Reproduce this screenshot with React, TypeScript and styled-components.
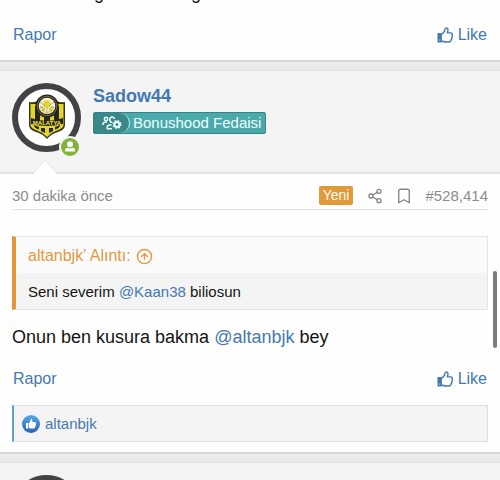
import React from "react";
import styled, { createGlobalStyle } from "styled-components";
import { Bookmark, CircleArrowUp, Share2 } from "lucide-react";

const GlobalStyle = createGlobalStyle`
  * { box-sizing: border-box; }
  html { overflow: hidden; }
  body {
    margin: 0;
    background: #ebebeb;
    color: #141414;
    font-family: "Liberation Sans", Arial, sans-serif;
    font-size: 16px;
    line-height: 20px;
  }
  a { color: #4479b0; text-decoration: none; }
  p { margin: 0; }
`;

const Feed = styled.main`
  display: flex;
  flex-direction: column;
  gap: 8px;
  height: 100vh;
  overflow: hidden;
`;

const Post = styled.article`
  flex: none;
  background: #fefefe;
  border-top: 1px solid #dedede;
  border-bottom: 2px solid #d8d8d8;
`;

const PreviousPost = styled(Post)`
  margin-top: -18px;
  border-top: 0;
`;

const PreviousBody = styled.div`
  padding: 0 12px 15px;
`;

const UserBar = styled.header`
  position: relative;
  display: flex;
  gap: 12px;
  height: 103px;
  padding: 12px;
  background: #f4f4f4;
  border-bottom: 2px solid #e2e2e2;
`;

const Notch = styled.svg`
  position: absolute;
  left: 34px;
  bottom: -2px;
  width: 22px;
  height: 15px;
`;

const Avatar = styled.a`
  position: relative;
  flex: none;
  display: block;
  width: 69px;
  height: 69px;
  border: 6px solid #434345;
  border-radius: 50%;
  background: #fff;
`;

const Crest = styled.svg`
  display: block;
  width: 36px;
  height: 46px;
  margin: 5px auto;
`;

const Online = styled.svg`
  position: absolute;
  right: -6px;
  bottom: -12px;
  width: 22px;
  height: 22px;
`;

const Identity = styled.div`
  display: flex;
  flex-direction: column;
  align-items: flex-start;
  padding-top: 3px;
  gap: 5px;
`;

const UserName = styled.a`
  font-size: 18px;
  font-weight: bold;
  line-height: 21px;
`;

const Rank = styled.div`
  display: flex;
  align-items: center;
  gap: 3px;
  height: 22px;
  padding-right: 4px;
  border: 1px solid #388385;
  border-radius: 2px;
  background: #4aa9ab;
  color: #edffff;
  font-size: 15px;
`;

const RankIcon = styled.span`
  display: flex;
  align-items: center;
  justify-content: center;
  width: 36px;
  height: 20px;
  border-right: 1px solid #c8ebeb;
  border-radius: 0 12px 12px 0;
  background: #39898b;
`;

const Content = styled.div`
  padding: 0 12px 10px;
`;

const Meta = styled.div`
  display: flex;
  align-items: center;
  justify-content: space-between;
  height: 36px;
  padding-top: 8px;
  border-bottom: 1px solid #e3e3e3;
  color: #8c8c8c;
  font-size: 15px;
`;

const MetaTools = styled.div`
  display: flex;
  align-items: center;
  gap: 12px;
`;

const NewTag = styled.span`
  padding: 0 4px;
  margin-right: 2px;
  border-radius: 2px;
  background: #e09a3a;
  color: #fffaf0;
  font-size: 14px;
  line-height: 19px;
`;

const IconButton = styled.button`
  display: flex;
  padding: 0;
  border: 0;
  background: none;
  color: #858585;
`;

const PostNumber = styled.a`
  color: #8c8c8c;
`;

const Quote = styled.blockquote`
  margin: 26px 0 0;
  border: 1px solid #e6e6e6;
  border-left: 4px solid #e1973a;
  background: #f4f4f4;
`;

const QuoteTitle = styled.a`
  display: flex;
  align-items: center;
  gap: 5px;
  height: 36px;
  padding: 2px 12px 0;
  background: #fafafa;
  color: #e19a43;
`;

const QuoteText = styled.p`
  height: 36px;
  padding: 9px 12px 0;
  font-size: 15px;
`;

const BodyText = styled.p`
  font-size: 18px;
  line-height: 22px;
`;

const Answer = styled(BodyText)`
  margin-top: 16px;
`;

const Actions = styled.div`
  display: flex;
  align-items: center;
  justify-content: space-between;
  height: 20px;
  margin-top: 21px;
  padding: 0 1px;
`;

const LikeButton = styled.button`
  display: flex;
  align-items: center;
  gap: 5px;
  padding: 0;
  border: 0;
  background: none;
  color: #4479b0;
  font: inherit;
`;

const Reactions = styled.div`
  display: flex;
  align-items: center;
  gap: 5px;
  height: 37px;
  margin-top: 16px;
  padding: 0 8px;
  border: 1px solid #dddfe1;
  border-left: 2px solid #5a9fde;
  background: #f4f4f4;
  font-size: 15px;
`;

const ScrollThumb = styled.div`
  position: fixed;
  top: 271px;
  right: 3px;
  width: 4px;
  height: 77px;
  border-radius: 2px;
  background: #7b7b7b;
`;

function ThumbIcon() {
  return (
    <svg width="16" height="16" viewBox="0 0 16 16" fill="none" stroke="currentColor" strokeWidth="1.4" strokeLinejoin="round" aria-hidden="true">
      <path d="M4.5 7C6.3 6.4 7.4 4.7 7.8 2.8C8.2 1.2 8.6.8 9.5.9C11.6 1.3 11.1 4 10.3 5.9H13.6C15.1 5.9 15.6 7 15.1 8.1C15.6 8.8 15.4 9.8 14.8 10.4C15.1 11.2 14.8 12.1 14.1 12.6C14.1 14.3 13.4 15 11.9 15H9.2C7.2 15 6.2 14.2 4.5 14" />
      <path d="M1.2 6.8H4.2V14.8H1.2Z" fill="currentColor" />
      <circle cx="2.7" cy="13" r=".6" fill="#fff" stroke="none" />
    </svg>
  );
}

function LikedIcon() {
  return (
    <svg width="18" height="18" viewBox="0 0 18 18" aria-hidden="true">
      <defs>
        <linearGradient id="liked" x2="0" y2="1">
          <stop stopColor="#55a9e6" />
          <stop offset="1" stopColor="#2861bd" />
        </linearGradient>
      </defs>
      <circle cx="9" cy="9" r="9" fill="url(#liked)" />
      <path d="M4 8H6.1V13.6H4ZM6.8 8C8.2 7 8.6 5.7 8.7 4.4C9.6 3.6 10.9 4.4 10.2 7.1H13C14.2 7.2 14.1 8.3 13.7 8.7C14.3 9.3 14 10.1 13.5 10.4C13.9 11.1 13.5 11.8 13 12C13.2 13.1 12.6 13.6 11.5 13.6H8.7L6.8 13Z" fill="#fff" />
    </svg>
  );
}

function ClubCrest() {
  return (
    <Crest viewBox="0 0 36 46" role="img" aria-label="Malatya">
      <path d="M0 8Q5 9 8 7H28Q31 9 36 8V31Q36 36 29 38Q22 40 18 45Q14 40 7 38Q0 36 0 31Z" fill="#3a361c" />
      <path d="M1.5 10H34.5V31Q34.5 34 28 36.5Q22 38.5 18 43Q14 38.5 8 36.5Q1.5 34 1.5 31Z" fill="#e3d52c" />
      <path d="M6 12H11V27H6ZM25 12H30V27H25ZM15 22H21V29H15ZM5 31L10 33V35.5Q5 34 5 31ZM26 33L31 31Q31 34 26 35.5ZM12 34H16V39L12 37ZM20 34H24V37L20 39Z" fill="#29271b" />
      <circle cx="18" cy="12" r="11.5" fill="#25231b" />
      <circle cx="18" cy="12" r="9.8" fill="none" stroke="#8d8537" strokeWidth=".8" />
      <circle cx="18" cy="12" r="8.3" fill="#f5f3e4" />
      <path d="M10.5 12L15 13L18 20L21 13L25.5 12L24 17L18 20L12 17Z" fill="#dfd66a" />
      <circle cx="18" cy="10" r="3.8" fill="#e3d52c" />
      <path d="M11 8L16 12M25 8L20 12M18 13V20M11 13H14M22 13H25M13 17L16 14M23 17L20 14" stroke="#8a8248" strokeWidth=".6" />
      <path d="M2 24Q18 30 34 24V30Q18 34 2 30Z" fill="#29271b" />
      <text x="18" y="31" textAnchor="middle" fill="#f0e44b" fontFamily="Liberation Sans" fontSize="6" fontWeight="bold">MALATYA</text>
    </Crest>
  );
}

function TeamIcon() {
  return (
    <svg width="20" height="16" viewBox="0 0 20 16" fill="none" stroke="#f2ffff" strokeWidth="1.5" aria-hidden="true">
      <circle cx="4" cy="4" r="1.7" />
      <path d="M1 10V8.5Q1 7.3 3 7.3H5M12.5 4Q12 1.7 9.8 2Q7.5 2.3 7.7 5Q8 7.4 10.3 7.2M10 13.8H5.3V12Q5.3 10 8 10H9.5" />
      <circle cx="15" cy="9.5" r="2.5" strokeWidth="2" />
      <circle cx="15" cy="9.5" r="3.8" strokeWidth="1.4" strokeDasharray="1.6 1.4" />
    </svg>
  );
}

function PostActions() {
  return (
    <Actions>
      <a href="#report">Rapor</a>
      <LikeButton type="button"><ThumbIcon />Like</LikeButton>
    </Actions>
  );
}

function NotchMark() {
  return (
    <Notch viewBox="0 0 22 15" aria-hidden="true">
      <path d="M0 15V13L11 1L22 13V15Z" fill="#fefefe" />
      <path d="M0 13L11 1L22 13" fill="none" stroke="#e5e5e5" />
    </Notch>
  );
}

export default function App() {
  return (
    <>
      <GlobalStyle />
      <Feed>
        <PreviousPost>
          <PreviousBody>
            <BodyText>Bunlar da gelirse beni gör</BodyText>
            <PostActions />
          </PreviousBody>
        </PreviousPost>
        <Post>
          <UserBar>
            <Avatar href="#member" aria-label="Sadow44">
              <ClubCrest />
              <Online viewBox="0 0 22 22" aria-hidden="true">
                <circle cx="11" cy="11" r="11" fill="#f4f4f4" />
                <circle cx="11" cy="11" r="9" fill="#82b338" />
                <circle cx="11" cy="8.3" r="3" fill="#fff" />
                <path d="M6 15.5V14Q6 11.8 8.5 11.8Q11 13 13.5 11.8Q16 11.8 16 14V15.5Z" fill="#fff" />
              </Online>
            </Avatar>
            <Identity>
              <UserName href="#member">Sadow44</UserName>
              <Rank><RankIcon><TeamIcon /></RankIcon>Bonushood Fedaisi</Rank>
            </Identity>
            <NotchMark />
          </UserBar>
          <Content>
            <Meta>
              <time>30 dakika önce</time>
              <MetaTools>
                <NewTag>Yeni</NewTag>
                <IconButton type="button" aria-label="Paylaş"><Share2 size={16} /></IconButton>
                <IconButton type="button" aria-label="Yer imi"><Bookmark size={18} strokeWidth={1.8} /></IconButton>
                <PostNumber href="#post">#528,414</PostNumber>
              </MetaTools>
            </Meta>
            <Quote>
              <QuoteTitle href="#quote">altanbjk' Alıntı: <CircleArrowUp size={17} /></QuoteTitle>
              <QuoteText>Seni severim <a href="#kaan">@Kaan38</a> biliosun</QuoteText>
            </Quote>
            <Answer>Onun ben kusura bakma <a href="#altanbjk">@altanbjk</a> bey</Answer>
            <PostActions />
            <Reactions><LikedIcon /><a href="#altanbjk">altanbjk</a></Reactions>
          </Content>
        </Post>
        <Post>
          <UserBar><Avatar href="#next" aria-label="Üye" /></UserBar>
        </Post>
      </Feed>
      <ScrollThumb />
    </>
  );
}
